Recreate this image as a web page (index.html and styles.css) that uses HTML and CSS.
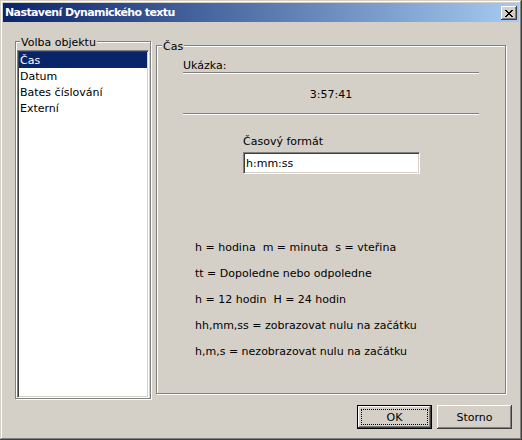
FILE: index.html
```html
<!DOCTYPE html>
<html lang="cs">
<head>
<meta charset="utf-8">
<title>Nastavení Dynamického textu</title>
<link rel="stylesheet" href="styles.css">
</head>
<body>
<div class="window">
  <div class="titlebar">
    <span class="title">Nastavení Dynamického textu</span>
    <button class="close" type="button"><svg width="8" height="7" viewBox="0 0 8 7" shape-rendering="crispEdges"><path d="M0 0h2v1H0zM6 0h2v1H6zM1 1h2v1H1zM5 1h2v1H5zM2 2h4v1H2zM3 3h2v1H3zM2 4h4v1H2zM1 5h2v1H1zM5 5h2v1H5zM0 6h2v1H0zM6 6h2v1H6z" fill="#000"/></svg></button>
  </div>
  <div class="client">
    <div class="main">
      <div class="group group-left">
        <span class="legend">Volba objektu</span>
        <ul class="listbox">
          <li class="selected">Čas</li>
          <li>Datum</li>
          <li>Bates číslování</li>
          <li>Externí</li>
        </ul>
      </div>
      <div class="group group-right">
        <span class="legend">Čas</span>
        <div class="sample">
          <div class="label">Ukázka:</div>
          <div class="etched"></div>
          <div class="clock">3:57:41</div>
          <div class="etched"></div>
        </div>
        <div class="format">
          <div class="label">Časový formát</div>
          <div class="edit">h:mm:ss</div>
        </div>
        <div class="help">
          <p>h = hodina  m = minuta  s = vteřina</p>
          <p>tt = Dopoledne nebo odpoledne</p>
          <p>h = 12 hodin  H = 24 hodin</p>
          <p>hh,mm,ss = zobrazovat nulu na začátku</p>
          <p>h,m,s = nezobrazovat nulu na začátku</p>
        </div>
      </div>
    </div>
    <div class="buttons">
      <button class="btn default" type="button"><span class="focus">OK</span></button>
      <button class="btn" type="button">Storno</button>
    </div>
  </div>
</div>
</body>
</html>
```

FILE: styles.css
```css
* { box-sizing: border-box; }
html, body { margin: 0; padding: 0; }
body {
  font-family: "DejaVu Sans", sans-serif;
  font-size: 11px;
  line-height: 13px;
  color: #000;
  background: #d4d0c8;
}
.window {
  width: 522px;
  height: 440px;
  padding: 3px;
  background: #d4d0c8;
  box-shadow: inset -1px -1px #404040, inset 1px 1px #d4d0c8, inset -2px -2px #808080, inset 2px 2px #fff;
  display: flex;
  flex-direction: column;
}
.titlebar {
  height: 19px;
  display: flex;
  align-items: flex-start;
  background: linear-gradient(to right, #0a246a, #a6caf0);
}
.title {
  flex: 1;
  color: #fff;
  font-weight: bold;
  line-height: 19px;
  padding-left: 2px;
  letter-spacing: -0.6px;
  white-space: nowrap;
}
.close {
  width: 16px;
  height: 14px;
  margin: 3px 2px 0 0;
  padding: 0;
  border: 0;
  background: #d4d0c8;
  box-shadow: inset -1px -1px #404040, inset 1px 1px #fff, inset -2px -2px #808080;
  display: flex;
  align-items: flex-start;
  justify-content: flex-start;
}
.close svg { display: block; margin: 4px 0 0 4px; }

.client { flex: 1; display: flex; flex-direction: column; }
.main { display: flex; align-items: flex-start; height: 377px; }

.group {
  position: relative;
  border: 1px solid #808080;
  box-shadow: inset 1px 1px #fff, 1px 1px #fff;
}
.legend {
  position: absolute;
  top: -6px;
  padding: 0 1px;
  background: #d4d0c8;
  white-space: nowrap;
}
.group-left {
  width: 136px;
  height: 358px;
  margin: 19px 0 0 12px;
  padding: 8px 1px 0 1px;
}
.group-left .legend { left: 4px; }
.group-right {
  width: 350px;
  height: 349px;
  margin: 23px 0 0 5px;
}
.group-right .legend { left: 5px; }

.listbox {
  list-style: none;
  margin: 0;
  width: 132px;
  height: 348px;
  padding: 1px;
  background: #fff;
  border: 1px solid;
  border-color: #808080 #fff #fff #808080;
  box-shadow: inset 1px 1px #404040, inset -1px -1px #d4d0c8;
}
.listbox li {
  height: 16px;
  line-height: 15px;
  padding: 1px 0 0 1px;
  white-space: nowrap;
}
.listbox li.selected { background: #0a246a; color: #fff; }

.sample { margin: 13px 0 0 26px; width: 296px; }
.etched { height: 2px; border-top: 1px solid #808080; border-bottom: 1px solid #fff; }
.clock { margin: 14px 0 12px; text-align: center; }

.format { margin: 20px 0 0 86px; }
.edit {
  margin-top: 4px;
  width: 177px;
  height: 22px;
  padding: 4px 0 0 2px;
  background: #fff;
  border: 1px solid;
  border-color: #808080 #fff #fff #808080;
  box-shadow: inset 1px 1px #404040, inset -1px -1px #d4d0c8;
}

.help { margin: 67px 0 0 38px; }
.help p { margin: 0 0 13px; white-space: pre; }

.buttons {
  display: flex;
  justify-content: flex-end;
  gap: 5px;
  margin-top: 6px;
  padding-right: 7px;
}
.btn {
  width: 75px;
  height: 24px;
  padding: 0;
  border: 0;
  font: inherit;
  color: #000;
  background: #d4d0c8;
  box-shadow: inset -1px -1px #404040, inset 1px 1px #fff, inset -2px -2px #808080;
  display: flex;
  align-items: center;
  justify-content: center;
}
.btn.default {
  box-shadow: inset 0 0 0 1px #000, inset -2px -2px #404040, inset 2px 2px #fff, inset -3px -3px #808080;
  align-items: stretch;
  justify-content: stretch;
}
.focus {
  flex: 1;
  margin: 4px;
  border: 1px dotted #000;
  display: flex;
  align-items: center;
  justify-content: center;
}
```
